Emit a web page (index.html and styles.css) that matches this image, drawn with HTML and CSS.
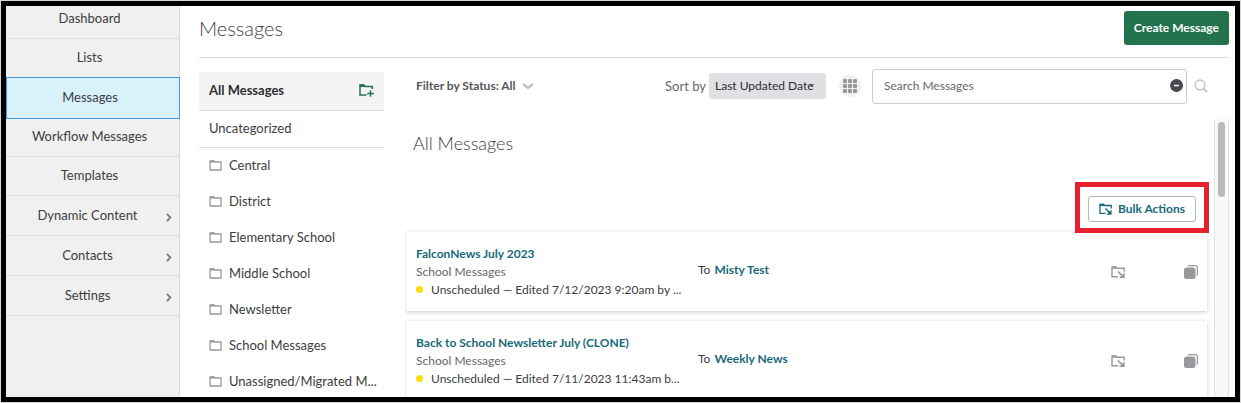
FILE: index.html
```html
<!DOCTYPE html>
<html lang="en">
<head>
    <meta charset="UTF-8">
    <meta name="viewport" content="width=device-width, initial-scale=1.0">
    <title>Messages</title>
    <link rel="stylesheet" href="styles.css">
</head>
<body>
    <svg class="sprite" aria-hidden="true">
        <symbol id="folder" viewBox="0 0 13 11">
            <path d="M1 10V1h4l1 1h6v8z" fill="none" stroke="currentColor" stroke-width="1.3" stroke-linejoin="round"/>
            <path d="M1 .5h4L6 2.6H1z" fill="currentColor"/>
        </symbol>
        <symbol id="folder-add" viewBox="0 0 15 13">
            <path d="M7.500 11H1V1h4l1 1.500h7.300V5" fill="none" stroke="currentColor" stroke-width="1.5"/>
            <path d="M1 .5h4L6.500 3H1z" fill="currentColor"/>
            <path d="M11.500 6.200v6.600M8.200 9.500h6.600" fill="none" stroke="currentColor" stroke-width="1.5"/>
        </symbol>
        <symbol id="folder-move" viewBox="0 0 14 13">
            <path d="M7 11.300H1V1.500h4l1 1.200h7.200V6" fill="none" stroke="currentColor" stroke-width="1.4"/>
            <path d="M1 .9h4l1.300 2.300H1z" fill="currentColor"/>
            <path d="M7 6l4 4" fill="none" stroke="currentColor" stroke-width="1.7"/>
            <path d="M13.600 7v5.600H8z" fill="currentColor"/>
        </symbol>
        <symbol id="copy" viewBox="0 0 14 14">
            <rect x="0" y="2.500" width="11.500" height="11.500" rx="2.500" fill="currentColor"/>
            <path d="M4 1.300Q4.500.6 5.500.6H11Q13.400.6 13.400 3v6q0 1-.8 1.500" fill="none" stroke="currentColor" stroke-width="1.2"/>
        </symbol>
        <symbol id="chevron" viewBox="0 0 6 9">
            <path d="M1 .8l3.300 3.700L1 8.200" fill="none" stroke="currentColor" stroke-width="1.8"/>
        </symbol>
    </svg>

    <nav class="sidebar">
        <a href="#">Dashboard</a>
        <a href="#">Lists</a>
        <a href="#" class="active">Messages</a>
        <a href="#">Workflow Messages</a>
        <a href="#">Templates</a>
        <a href="#" class="has-menu">Dynamic Content<svg><use href="#chevron"/></svg></a>
        <a href="#" class="has-menu">Contacts<svg><use href="#chevron"/></svg></a>
        <a href="#" class="has-menu">Settings<svg><use href="#chevron"/></svg></a>
    </nav>

    <main>
        <header class="page-header">
            <h1>Messages</h1>
            <button type="button" class="create">Create Message</button>
        </header>

        <div class="columns">
            <aside class="folders">
                <div class="folder-head">
                    <a href="#">All Messages</a>
                    <button type="button" aria-label="Add folder"><svg><use href="#folder-add"/></svg></button>
                </div>
                <a href="#" class="uncategorized">Uncategorized</a>
                <ul>
                    <li><a href="#"><svg><use href="#folder"/></svg>Central</a></li>
                    <li><a href="#"><svg><use href="#folder"/></svg>District</a></li>
                    <li><a href="#"><svg><use href="#folder"/></svg>Elementary School</a></li>
                    <li><a href="#"><svg><use href="#folder"/></svg>Middle School</a></li>
                    <li><a href="#"><svg><use href="#folder"/></svg>Newsletter</a></li>
                    <li><a href="#"><svg><use href="#folder"/></svg>School Messages</a></li>
                    <li><a href="#"><svg><use href="#folder"/></svg>Unassigned/Migrated M...</a></li>
                </ul>
            </aside>

            <section class="content">
                <div class="toolbar">
                    <button type="button" class="filter">Filter by Status: All
                        <svg viewBox="0 0 12 7"><path d="M1 1l5 4 5-4" fill="none" stroke="currentColor" stroke-width="2.400" stroke-linejoin="round"/></svg>
                    </button>
                    <label for="sort">Sort by</label>
                    <select id="sort">
                        <option>Last Updated Date</option>
                    </select>
                    <button type="button" class="grid-view" aria-label="Grid view">
                        <svg viewBox="0 0 14 14" fill="currentColor">
                            <rect x="0" y="0" width="4" height="4" rx="1"/><rect x="5" y="0" width="4" height="4" rx="1"/><rect x="10" y="0" width="4" height="4" rx="1"/>
                            <rect x="0" y="5" width="4" height="4" rx="1"/><rect x="5" y="5" width="4" height="4" rx="1"/><rect x="10" y="5" width="4" height="4" rx="1"/>
                            <rect x="0" y="10" width="4" height="4" rx="1"/><rect x="5" y="10" width="4" height="4" rx="1"/><rect x="10" y="10" width="4" height="4" rx="1"/>
                        </svg>
                    </button>
                    <div class="search">
                        <input type="text" placeholder="Search Messages" aria-label="Search Messages">
                        <button type="button" class="clear" aria-label="Clear">
                            <svg viewBox="0 0 13 13"><circle cx="6.500" cy="6.500" r="6.500" fill="#48494d"/><path d="M4 6.500h5" stroke="#fff" stroke-width="1.500"/></svg>
                        </button>
                    </div>
                    <button type="button" class="find" aria-label="Search">
                        <svg viewBox="0 0 14 14" fill="none" stroke="currentColor"><circle cx="6" cy="6" r="4.800" stroke-width="1.700"/><path d="M9.500 9.500l3.500 3.500" stroke-width="2.200"/></svg>
                    </button>
                </div>

                <div class="scroller">
                    <div class="list">
                        <h2>All Messages</h2>
                        <div class="highlight">
                            <button type="button" class="bulk"><svg><use href="#folder-move"/></svg>Bulk Actions</button>
                        </div>

                        <article class="card">
                            <div class="info">
                                <a href="#">FalconNews July 2023</a>
                                <p class="category">School Messages</p>
                                <p class="status">Unscheduled — Edited 7/12/2023 9:20am by ...</p>
                            </div>
                            <p class="to">To <a href="#">Misty Test</a></p>
                            <button type="button" aria-label="Move"><svg><use href="#folder-move"/></svg></button>
                            <button type="button" aria-label="Copy"><svg><use href="#copy"/></svg></button>
                        </article>

                        <article class="card">
                            <div class="info">
                                <a href="#">Back to School Newsletter July (CLONE)</a>
                                <p class="category">School Messages</p>
                                <p class="status">Unscheduled — Edited 7/11/2023 11:43am b...</p>
                            </div>
                            <p class="to">To <a href="#">Weekly News</a></p>
                            <button type="button" aria-label="Move"><svg><use href="#folder-move"/></svg></button>
                            <button type="button" aria-label="Copy"><svg><use href="#copy"/></svg></button>
                        </article>
                    </div>
                    <div class="track"><div class="thumb"></div></div>
                </div>
            </section>
        </div>
    </main>
</body>
</html>
```
FILE: styles.css
```css
:root {
    --text: #3c3d42;
    --muted: #66686c;
    --link: #17697a;
    --green: #22724e;
    --line: #dcdce1;
    --icon: #98999c;
}

* {
    margin: 0;
    padding: 0;
    box-sizing: border-box;
}

html {
    background: #d8d8d8;
    padding: 1px;
}

body {
    display: flex;
    height: calc(100vh - 2px);
    border: 5px solid #000;
    background: #fff;
    color: var(--text);
    font: 13px/18px Lato, "Liberation Sans", sans-serif;
    overflow: hidden;
}

a {
    color: inherit;
    text-decoration: none;
}

button {
    font: inherit;
    color: inherit;
    background: none;
    border: none;
    cursor: pointer;
}

svg {
    display: block;
    flex: none;
}

ul {
    list-style: none;
}

.sprite {
    display: none;
}


.sidebar {
    width: 174px;
    flex: none;
    background: #f0f0f0;
    border-right: 1px solid var(--line);
}

.sidebar a {
    position: relative;
    display: flex;
    align-items: center;
    justify-content: center;
    height: 39px;
    padding: 0 12px 2px 6px;
    border-bottom: 1px solid var(--line);
}

.sidebar a:first-child {
    margin-top: -6px;
}

.sidebar a.active {
    height: 42px;
    margin: -1px -1px -1px 0;
    background: #d9f1fb;
    border: 1px solid #3f9bdc;
}

.sidebar a.has-menu {
    height: 40px;
    padding-right: 16px;
}

.sidebar svg {
    position: absolute;
    right: 7px;
    top: 17px;
    width: 6px;
    height: 9px;
    color: #77797c;
}


main {
    flex: 1;
    min-width: 0;
    display: flex;
    flex-direction: column;
    padding: 0 6px 0 19px;
}

.page-header {
    display: flex;
    justify-content: space-between;
    align-items: center;
    height: 52px;
    flex: none;
    padding-bottom: 7px;
    border-bottom: 1px solid var(--line);
}

h1, h2 {
    font-weight: 300;
}

h1 {
    font-size: 20px;
}

h2 {
    font-size: 18px;
}

.create {
    height: 34px;
    padding: 0 10px;
    background: var(--green);
    color: #fff;
    border-radius: 3px;
    font-size: 12px;
    font-weight: 700;
}

.columns {
    flex: 1;
    min-height: 0;
    display: flex;
    gap: 21px;
}

.folders {
    width: 185px;
    flex: none;
    padding-top: 14px;
}

.folder-head {
    display: flex;
    align-items: center;
    justify-content: space-between;
    height: 39px;
    padding: 0 10px 2px;
    background: #f4f4f4;
    border-bottom: 1px solid var(--line);
    color: #2d2e32;
    font-weight: 700;
}

.folder-head svg {
    width: 15px;
    height: 13px;
    color: var(--green);
}

.uncategorized {
    display: flex;
    align-items: center;
    height: 37px;
    padding: 0 10px 2px;
    border-bottom: 1px solid var(--line);
}

.folders li a {
    display: flex;
    align-items: center;
    gap: 7px;
    height: 36px;
    padding: 0 10px 2px;
    white-space: nowrap;
}

.folders li svg {
    width: 13px;
    height: 11px;
    color: var(--icon);
}


.content {
    flex: 1;
    min-width: 0;
    display: flex;
    flex-direction: column;
}

.toolbar {
    display: flex;
    align-items: center;
    height: 61px;
    flex: none;
    padding: 0 21px 5px 11px;
    font-size: 12px;
}

.filter {
    display: flex;
    align-items: center;
    gap: 6px;
    margin-right: auto;
    color: #55575b;
    font-weight: 700;
}

.filter svg {
    width: 12px;
    height: 7px;
    color: #bcc5c9;
}

.toolbar label {
    color: var(--muted);
    font-size: 13px;
}

.toolbar select {
    width: 117px;
    height: 26px;
    margin: 0 13px 0 3px;
    padding: 0 6px 1px;
    appearance: none;
    background: #dfdfe4 conic-gradient(from -40deg at 50% 100%, #8d8e92 80deg, transparent 0) no-repeat right 12px top 11px / 5px 3px;
    border: none;
    border-radius: 3px;
    color: #2d2e32;
    font: inherit;
}

.grid-view {
    display: grid;
    place-items: center;
    width: 22px;
    height: 22px;
    margin-right: 11px;
    border-radius: 50%;
    background: #f0f0f0;
    color: var(--icon);
}

.grid-view svg {
    width: 14px;
    height: 14px;
}

.search {
    position: relative;
    width: 315px;
}

.search input {
    display: block;
    width: 100%;
    height: 35px;
    padding: 0 28px 1px 11px;
    border: 1px solid #cbccd0;
    border-radius: 3px;
    color: var(--text);
    font: inherit;
}

.search input::placeholder {
    color: #66686c;
}

.clear {
    position: absolute;
    top: 10px;
    right: 4px;
}

.clear svg {
    width: 13px;
    height: 13px;
}

.find {
    margin-left: 7px;
    color: #c5cbcd;
}

.find svg {
    width: 14px;
    height: 14px;
}

.scroller {
    flex: 1;
    min-height: 0;
    display: flex;
}

.list {
    flex: 1;
    min-width: 0;
    display: flex;
    flex-direction: column;
    padding: 15px 7px 0 1px;
    overflow: hidden;
}

.list h2 {
    padding-left: 7px;
    margin-bottom: 30px;
}

.highlight {
    position: relative;
    align-self: flex-end;
    flex: none;
    margin: 0 -2px -1px 0;
    padding: 9px 8px 6px;
    border: 5px solid #e8202e;
}

.bulk {
    display: flex;
    align-items: center;
    gap: 6px;
    height: 26px;
    padding: 0 10px;
    border: 1px solid #b4b5b8;
    border-radius: 3px;
    color: var(--link);
    font-size: 12px;
    font-weight: 700;
}

.bulk svg {
    width: 13px;
    height: 12px;
}

.card {
    display: flex;
    align-items: center;
    flex: none;
    height: 79px;
    margin-bottom: 10px;
    padding: 0 9px 0 10px;
    background: #fff;
    box-shadow: 0 1px 4px rgba(40, 40, 60, 0.25);
    font-size: 12px;
}

.card a {
    color: var(--link);
    font-weight: 700;
}

.info {
    width: 282px;
}

.category {
    color: var(--muted);
}

.status {
    display: flex;
    align-items: center;
    gap: 8px;
}

.status::before {
    content: "";
    width: 7px;
    height: 7px;
    border-radius: 50%;
    background: #fbdc0c;
}

.to {
    margin-right: auto;
    padding-bottom: 4px;
}

.to a {
    margin-left: 1px;
}

.card button {
    color: var(--icon);
}

.card button + button {
    margin-left: 59px;
}

.card svg {
    width: 14px;
    height: 14px;
}

.track {
    width: 15px;
    flex: none;
    padding: 3px;
    border: 1px solid #e2e3e9;
    border-width: 0 1px;
    background: #f8f9f9;
}

.thumb {
    height: 75px;
    border-radius: 4px;
    background: #b9babb;
}
```
